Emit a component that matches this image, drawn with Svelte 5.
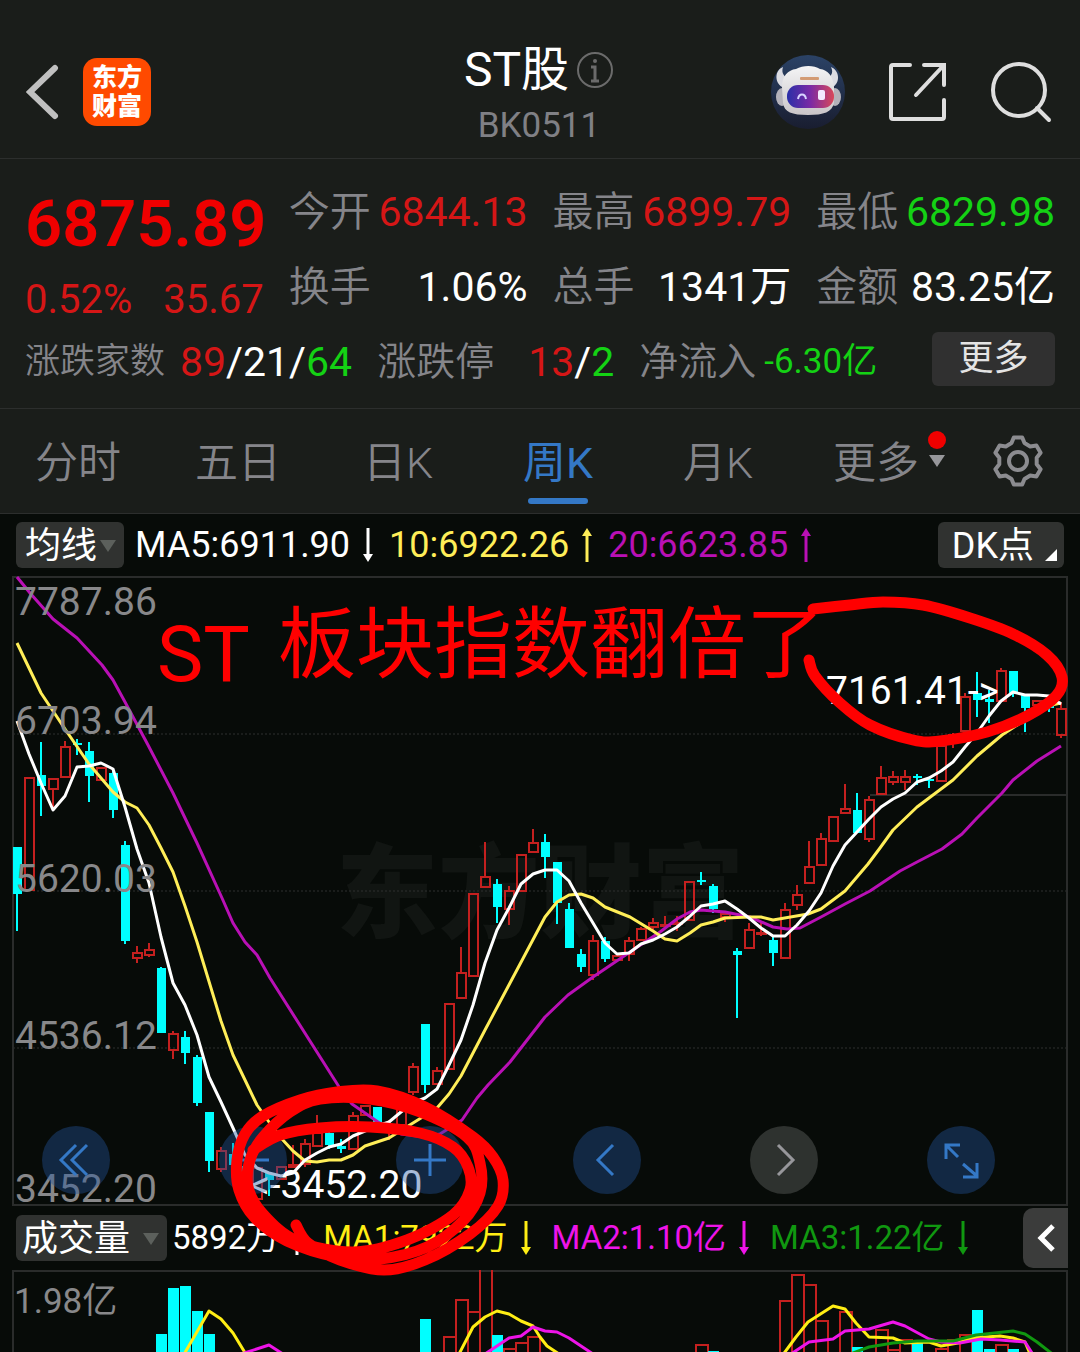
<script lang="ts">
	type Point = [number, number];
	// high, body top, body bottom, low, 1 = rising
	type Candle = [number, number, number, number, 0 | 1];

	const STEP = 12;
	const FIRST_X = 17;

	const quotes = [
		{ label: "今开", value: "6844.13", tone: "up" },
		{ label: "最高", value: "6899.79", tone: "up" },
		{ label: "最低", value: "6829.98", tone: "down" },
		{ label: "换手", value: "1.06%", tone: "flat" },
		{ label: "总手", value: "1341万", tone: "flat" },
		{ label: "金额", value: "83.25亿", tone: "flat" },
	];

	const tabs = ["分时", "五日", "日K", "周K", "月K"];
	let active = $state("周K");

	const averages = [
		{ text: "MA5:6911.90", tone: "white", down: true },
		{ text: "10:6922.26", tone: "yellow", down: false },
		{ text: "20:6623.85", tone: "purple", down: false },
	];

	const volumes = [
		{ text: "5892万", tone: "white", down: false },
		{ text: "MA1:7922万", tone: "bright-yellow", down: true },
		{ text: "MA2:1.10亿", tone: "magenta", down: true },
		{ text: "MA3:1.22亿", tone: "green", down: true },
	];

	const tools = [
		{ name: "最早", icon: "M34 19 L19 34 L34 49 M45 19 L30 34 L45 49" },
		{ name: "缩小", icon: "M18 34 H50" },
		{ name: "放大", icon: "M18 34 H50 M34 18 V50" },
		{ name: "向左", icon: "M40 19 L25 34 L40 49" },
		{ name: "向右", icon: "M28 19 L43 34 L28 49", muted: true },
		{ name: "全屏", icon: "M33 19 H19 V33 M19 19 L31 31 M36 38 L50 50 M36 51 H50 V37" },
	];

	const priceLabels = [
		{ text: "7787.86", y: 615 },
		{ text: "6703.94", y: 734 },
		{ text: "5620.03", y: 892 },
		{ text: "4536.12", y: 1049 },
		{ text: "3452.20", y: 1202 },
	];

	const candles: Candle[] = [
		[847, 847, 894, 931, 0], [777, 777, 891, 891, 1], [742, 775, 786, 816, 0], [778, 778, 790, 807, 1],
		[741, 746, 778, 778, 1], [739, 743, 745, 755, 0], [742, 751, 776, 802, 0], [767, 767, 781, 781, 1],
		[770, 773, 810, 818, 0], [841, 845, 941, 944, 0], [946, 952, 959, 963, 1], [943, 949, 956, 957, 1],
		[967, 968, 1033, 1033, 0], [1031, 1033, 1051, 1059, 1], [1031, 1037, 1053, 1064, 0], [1055, 1057, 1103, 1106, 0],
		[1112, 1112, 1161, 1172, 0], [1147, 1150, 1170, 1172, 1], [1143, 1154, 1165, 1166, 0], [1160, 1166, 1188, 1198, 0],
		[1167, 1167, 1200, 1201, 1], [1172, 1173, 1180, 1196, 0], [1166, 1166, 1180, 1180, 1], [1145, 1164, 1168, 1168, 1],
		[1139, 1143, 1165, 1167, 1], [1115, 1132, 1147, 1147, 1], [1132, 1133, 1145, 1149, 0], [1139, 1146, 1149, 1153, 0],
		[1112, 1115, 1150, 1150, 1], [1105, 1105, 1116, 1116, 1], [1107, 1107, 1123, 1124, 0], [1120, 1125, 1133, 1140, 1],
		[1106, 1106, 1126, 1126, 1], [1063, 1066, 1093, 1095, 1], [1024, 1024, 1085, 1093, 0], [1067, 1070, 1085, 1085, 1],
		[1003, 1003, 1070, 1070, 1], [947, 972, 999, 999, 1], [893, 893, 977, 977, 1], [842, 876, 888, 888, 1],
		[879, 884, 907, 923, 0], [886, 890, 910, 925, 1], [854, 854, 892, 892, 1], [829, 842, 853, 853, 1],
		[834, 842, 857, 878, 0], [862, 862, 903, 924, 0], [903, 909, 948, 948, 0], [949, 954, 967, 972, 0],
		[935, 940, 976, 980, 1], [937, 941, 959, 962, 0], [955, 955, 961, 961, 1], [937, 940, 955, 961, 1],
		[927, 928, 941, 941, 1], [918, 922, 928, 930, 1], [916, 924, 926, 928, 1], [916, 922, 925, 931, 1],
		[881, 881, 921, 921, 1], [872, 880, 882, 885, 0], [884, 886, 909, 913, 0], [913, 913, 918, 922, 1],
		[948, 951, 955, 1018, 0], [923, 929, 949, 949, 1], [922, 932, 934, 936, 1], [937, 940, 953, 966, 0],
		[903, 909, 959, 959, 1], [885, 894, 906, 910, 1], [841, 866, 884, 884, 1], [833, 838, 866, 866, 1],
		[816, 816, 842, 842, 1], [784, 808, 814, 814, 1], [793, 810, 833, 833, 0], [796, 799, 840, 842, 1],
		[766, 777, 795, 795, 1], [771, 776, 783, 785, 1], [770, 776, 783, 790, 1], [774, 776, 778, 785, 0],
		[777, 779, 781, 788, 0], [745, 745, 782, 782, 1], [733, 734, 737, 748, 1], [693, 696, 732, 732, 1],
		[672, 693, 700, 717, 0], [690, 699, 702, 723, 0], [668, 670, 702, 702, 1], [671, 671, 694, 697, 0],
		[695, 695, 708, 732, 0], [700, 700, 706, 706, 1], [703, 704, 708, 712, 0], [702, 708, 736, 738, 1],
	];

	const ma5 = [
		721, 754, 783, 810, 796, 767, 766, 763, 769, 807, 849, 883, 937, 983, 1005, 1035, 1077, 1102, 1128, 1155,
		1168, 1173, 1176, 1173, 1160, 1153, 1147, 1144, 1136, 1131, 1126, 1122, 1112, 1103, 1098, 1089, 1065, 1040,
		1005, 963, 930, 908, 884, 874, 870, 870, 881, 903, 923, 943, 954, 953, 944, 940, 934, 927, 917, 906, 904,
		901, 909, 918, 928, 936, 936, 925, 911, 893, 866, 845, 832, 819, 807, 799, 793, 782, 778, 771, 762, 747,
		733, 716, 701, 692, 695, 695, 696, 704,
	].map((y, i): Point => [FIRST_X + i * STEP, y]);

	const ma10: Point[] = [
		[17, 643], [41, 693], [65, 729], [89, 764], [101, 778], [113, 792], [125, 802], [137, 808], [149, 825],
		[161, 848], [173, 872], [185, 906], [197, 942], [221, 1021], [233, 1055], [245, 1080], [257, 1105],
		[269, 1122], [281, 1138], [293, 1151], [305, 1161], [317, 1162], [329, 1160], [341, 1160], [353, 1155],
		[365, 1146], [389, 1138], [413, 1123], [437, 1108], [449, 1094], [461, 1076], [485, 1030], [510, 983],
		[545, 917], [557, 902], [569, 895], [581, 894], [593, 898], [605, 907], [630, 917], [653, 931], [665, 939],
		[677, 941], [690, 933], [701, 925], [713, 922], [725, 918], [750, 917], [761, 917], [773, 920], [808, 914],
		[821, 909], [845, 891], [868, 864], [880, 848], [893, 830], [917, 807], [953, 780], [977, 756],
		[1002, 735], [1025, 720], [1047, 706], [1061, 703],
	];

	const ma20: Point[] = [
		[17, 577], [30, 593], [53, 619], [77, 638], [102, 665], [113, 680], [125, 702], [148, 745], [173, 793],
		[197, 843], [222, 898], [233, 923], [245, 942], [257, 955], [270, 978], [322, 1060], [341, 1090],
		[352, 1104], [378, 1122], [401, 1134], [425, 1137], [440, 1134], [462, 1120], [477, 1098], [488, 1085],
		[510, 1062], [545, 1017], [568, 995], [593, 977], [630, 952], [660, 932], [677, 919], [690, 912],
		[701, 910], [725, 912], [750, 917], [773, 927], [787, 929], [800, 928], [821, 917], [845, 904], [870, 891],
		[900, 871], [917, 862], [942, 849], [962, 834], [977, 818], [1002, 793], [1013, 780], [1037, 761],
		[1061, 746],
	];

	// candle index, top, 1 = rising
	const bars: [number, number, 0 | 1][] = [
		[12, 1334, 0], [13, 1288, 0], [14, 1286, 0], [15, 1311, 0], [16, 1334, 0], [34, 1319, 0], [36, 1337, 1],
		[37, 1300, 1], [38, 1312, 1], [39, 1266, 1], [40, 1335, 0], [41, 1349, 1], [42, 1343, 1], [43, 1337, 1],
		[57, 1345, 1], [58, 1351, 0], [64, 1301, 1], [65, 1275, 1], [66, 1285, 1], [67, 1321, 1], [69, 1312, 1],
		[70, 1347, 0], [72, 1330, 1], [73, 1350, 1], [74, 1340, 1], [75, 1343, 0], [77, 1349, 1], [78, 1340, 1],
		[79, 1335, 1], [80, 1310, 0], [81, 1349, 0], [82, 1345, 1], [83, 1349, 0],
	];

	const volumeLines: { tone: string; points: Point[] }[] = [
		{ tone: "bright-yellow", points: [[183, 1356], [209, 1311], [221, 1319], [233, 1333], [247, 1356]] },
		{
			tone: "bright-yellow",
			points: [[458, 1356], [473, 1327], [485, 1317], [497, 1311], [509, 1314], [521, 1321], [533, 1326], [540, 1337], [547, 1346], [562, 1356]],
		},
		{
			tone: "bright-yellow",
			points: [[782, 1356], [796, 1337], [808, 1322], [833, 1306], [845, 1309], [856, 1323], [869, 1337], [893, 1338], [905, 1343], [929, 1342], [941, 1346], [958, 1343], [972, 1338], [1000, 1336], [1013, 1338], [1025, 1342], [1031, 1356]],
		},
		{ tone: "magenta", points: [[235, 1356], [269, 1345], [286, 1356]] },
		{
			tone: "magenta",
			points: [[482, 1356], [509, 1338], [521, 1336], [533, 1327], [545, 1331], [557, 1332], [569, 1338], [596, 1356]],
		},
		{
			tone: "magenta",
			points: [[788, 1356], [809, 1342], [833, 1339], [845, 1331], [869, 1329], [893, 1322], [905, 1326], [929, 1339], [941, 1342], [960, 1343], [981, 1339], [1000, 1340], [1025, 1342], [1034, 1356]],
		},
		{
			tone: "green",
			points: [[845, 1356], [869, 1347], [893, 1343], [917, 1341], [953, 1341], [976, 1335], [1013, 1331], [1025, 1334], [1037, 1342], [1055, 1356]],
		},
	];

	const peakStroke: Point[] = [
		[813, 609], [850, 605], [883, 602], [923, 605], [970, 618], [1013, 634], [1047, 655], [1062, 677], [1056, 696],
		[1027, 716], [987, 732], [940, 741], [913, 740], [870, 725], [840, 703], [815, 676], [809, 660],
	];

	const bottomStroke: Point[] = [
		[296, 1225], [308, 1243], [340, 1260], [384, 1270], [425, 1260], [470, 1234], [498, 1206], [503, 1180],
		[493, 1157], [473, 1137], [425, 1107], [377, 1091], [337, 1092], [300, 1100], [263, 1116], [245, 1134],
		[237, 1160], [239, 1190], [255, 1218], [287, 1241], [337, 1257], [380, 1259], [427, 1247], [463, 1221],
		[480, 1193], [480, 1163], [467, 1137], [420, 1112], [370, 1099], [320, 1099], [290, 1112], [263, 1137],
		[250, 1160], [248, 1187], [263, 1214], [297, 1241], [353, 1252], [407, 1240], [453, 1215], [470, 1190],
		[468, 1167], [453, 1147], [420, 1133], [370, 1127], [320, 1128], [280, 1135], [253, 1150],
	];

	function polyline(points: Point[]) {
		return points.map((p) => p.join(",")).join(" ");
	}

	// Catmull-Rom through every point
	function smooth(points: Point[]) {
		let d = `M${points[0]}`;
		for (let i = 0; i < points.length - 1; i++) {
			const a = points[i - 1] ?? points[i];
			const b = points[i];
			const c = points[i + 1];
			const e = points[i + 2] ?? c;
			d += ` C${b[0] + (c[0] - a[0]) / 6},${b[1] + (c[1] - a[1]) / 6}`;
			d += ` ${c[0] - (e[0] - b[0]) / 6},${c[1] - (e[1] - b[1]) / 6} ${c}`;
		}
		return d;
	}

	function gear() {
		const points: string[] = [];
		for (let k = 0; k < 6; k++) {
			for (const [offset, r] of [[-20, 19], [-10, 24], [10, 24], [20, 19]]) {
				const angle = ((k * 60 - 90 + offset) * Math.PI) / 180;
				points.push(`${(26 + r * Math.cos(angle)).toFixed(1)},${(26 + r * Math.sin(angle)).toFixed(1)}`);
			}
		}
		return points.join(" ");
	}
</script>

{#snippet arrow(down: boolean)}
	<svg class="arrow" viewBox="0 0 12 34" aria-hidden="true">
		{#if down}
			<path d="M6 0 V30" fill="none" stroke="currentColor" stroke-width="3" />
			<path d="M1 26 H11 L6 34 Z" fill="currentColor" />
		{:else}
			<path d="M6 4 V34" fill="none" stroke="currentColor" stroke-width="3" />
			<path d="M1 8 H11 L6 0 Z" fill="currentColor" />
		{/if}
	</svg>
{/snippet}

<main class="app">
	<header class="topbar">
		<div class="side">
			<button class="icon" aria-label="返回">
				<svg width="34" height="60" viewBox="0 0 34 60">
					<path d="M29 6 L4 30 L29 54" fill="none" stroke="#c0c0c0" stroke-width="6" stroke-linecap="round" />
				</svg>
			</button>
			<div class="brand"><span>东方</span><span>财富</span></div>
		</div>
		<div class="heading">
			<h1>
				ST股
				<svg width="38" height="38" viewBox="0 0 38 38" aria-hidden="true">
					<circle cx="19" cy="19" r="17" fill="none" stroke="#6b6b6b" stroke-width="2" />
					<circle cx="19" cy="10" r="2" fill="#6b6b6b" />
					<path d="M15 16 H19 V29 M15 30 H23" fill="none" stroke="#6b6b6b" stroke-width="3" />
				</svg>
			</h1>
			<p>BK0511</p>
		</div>
		<div class="side end">
			<button class="icon" aria-label="智能助手">
				<svg width="76" height="76" viewBox="0 0 76 76">
					<defs>
						<linearGradient id="sky" x2="0" y2="1">
							<stop offset="0" stop-color="#2b4266" />
							<stop offset="1" stop-color="#191d30" />
						</linearGradient>
						<linearGradient id="fur" x2="0" y2="1">
							<stop offset="0" stop-color="#f4f4f5" />
							<stop offset="1" stop-color="#c9c5c8" />
						</linearGradient>
						<linearGradient id="visor">
							<stop offset="0" stop-color="#2a2fa8" />
							<stop offset=".5" stop-color="#7b2aa5" />
							<stop offset="1" stop-color="#d8485a" />
						</linearGradient>
					</defs>
					<circle cx="38" cy="38" r="37" fill="url(#sky)" />
					<path d="M13 13 C5 16 4 28 12 33 L20 25 C14 23 11 19 13 13 Z M61 13 C69 16 71 28 63 33 L55 25 C61 23 64 19 61 13 Z" fill="#dcdce2" />
					<ellipse cx="12" cy="43" rx="6" ry="9" fill="#b4b2ba" />
					<ellipse cx="65" cy="43" rx="6" ry="9" fill="#b4b2ba" />
					<path d="M12 33 C12 22 18 16 26 15 C33 11 44 11 50 15 C58 16 63 22 64 33 L64 49 C62 58 54 61 38 61 C22 61 14 58 13 49 Z" fill="url(#fur)" />
					<rect x="17" y="31" width="47" height="23" rx="11" fill="url(#visor)" />
					<rect x="30" y="23" width="19" height="3" rx="1" fill="#d39b74" />
					<path d="M28 45 C29 39 35 39 36 45" fill="none" stroke="#d8d4ff" stroke-width="2" />
					<rect x="48" y="36" width="7" height="10" rx="2" fill="#f3e9ff" />
				</svg>
			</button>
			<button class="icon" aria-label="分享">
				<svg width="60" height="60" viewBox="0 0 60 60">
					<path d="M22 3 H5 Q3 3 3 5 V55 Q3 57 5 57 H54 Q56 57 56 55 V38 M36 3 H56 V23 M56 3 L28 33" fill="none" stroke="#dedede" stroke-width="4" stroke-linecap="round" />
				</svg>
			</button>
			<button class="icon" aria-label="搜索">
				<svg width="62" height="62" viewBox="0 0 62 62">
					<circle cx="29" cy="29" r="26" fill="none" stroke="#dedede" stroke-width="4" />
					<path d="M47 47 L59 59" stroke="#dedede" stroke-width="4" stroke-linecap="round" />
				</svg>
			</button>
		</div>
	</header>

	<section class="quote">
		<div class="grid">
			<div class="price up">
				<strong>6875.89</strong>
				<div class="change"><span>0.52%</span><span>35.67</span></div>
			</div>
			{#each quotes as { label, value, tone }}
				<div class="cell"><span class="label">{label}</span><span class={tone}>{value}</span></div>
			{/each}
		</div>
		<div class="breadth">
			<div class="group">
				<span class="label small">涨跌家数</span>
				<span><i class="up">89</i>/21/<i class="down">64</i></span>
			</div>
			<div class="group wide">
				<span class="label">涨跌停</span>
				<span><i class="up">13</i>/<i class="down">2</i></span>
			</div>
			<div class="group flow">
				<span class="label">净流入</span>
				<span class="down small">-6.30亿</span>
			</div>
			<button class="more">更多</button>
		</div>
	</section>

	<nav class="tabs">
		{#each tabs as tab}
			<button class="tab" class:active={tab === active} onclick={() => (active = tab)}>{tab}</button>
		{/each}
		<button class="tab menu">
			更多
			<span class="dot"></span>
			<span class="caret"></span>
		</button>
		<button class="tab settings" aria-label="设置">
			<svg width="52" height="52" viewBox="0 0 52 52">
				<polygon points={gear()} fill="none" stroke="#8c8c90" stroke-width="4" stroke-linejoin="round" />
				<circle cx="26" cy="26" r="9" fill="none" stroke="#8c8c90" stroke-width="4" />
			</svg>
		</button>
	</nav>

	<div class="indicator">
		<button class="chip">均线<span class="caret"></span></button>
		{#each averages as { text, tone, down }}
			<span class="reading {tone}">{text}{@render arrow(down)}</span>
		{/each}
		<button class="chip dk">DK点<span class="corner"></span></button>
	</div>

	<section class="chart">
		<svg class="plot" viewBox="12 576 1056 630" role="img" aria-label="周K线">
			<text class="watermark" x="336" y="930">东方财富</text>
			<path class="grid-line" d="M13 734 H1067 M13 891 H1067 M13 1048 H1067" />
			<path class="frame" d="M870 795 H1067" />
			<rect class="frame" x="13" y="577" width="1054" height="628" />
			{#each candles as [high, top, bottom, low, rising], i}
				{@const x = FIRST_X + i * STEP}
				{#if rising}
					<path class="rising" d="M{x} {high} V{top} M{x} {bottom} V{low}" />
					<rect class="rising" x={x - 4} y={top + 1} width="9" height={Math.max(bottom - top - 2, 1)} />
				{:else}
					<path class="falling" d="M{x} {high} V{low}" />
					<rect class="falling-body" x={x - 4} y={top} width="9" height={bottom - top} />
				{/if}
			{/each}
			<polyline class="line purple" points={polyline(ma20)} />
			<polyline class="line yellow" points={polyline(ma10)} />
			<polyline class="line white" points={polyline(ma5)} />
			{#each priceLabels as { text, y }}
				<text class="axis" x="15" {y}>{text}</text>
			{/each}
			<text class="extreme" x="826" y="704">7161.41-&gt;</text>
			<text class="extreme" x="250" y="1198">&lt;-3452.20</text>
		</svg>
		<div class="tools">
			{#each tools as { name, icon, muted }}
				<button class="tool" class:muted aria-label={name}>
					<svg viewBox="0 0 68 68"><path d={icon} fill="none" stroke="currentColor" stroke-width="3" /></svg>
				</button>
			{/each}
		</div>
		<svg class="scribble" viewBox="12 576 1056 630" aria-hidden="true">
			<text x="157" y="681">ST</text>
			<text x="278" y="672">板块指数翻倍了</text>
			<path d={smooth(peakStroke)} />
			<path d={smooth(bottomStroke)} />
		</svg>
	</section>

	<div class="indicator volume">
		<button class="chip">成交量<span class="caret"></span></button>
		{#each volumes as { text, tone, down }}
			<span class="reading {tone}">{text}{@render arrow(down)}</span>
		{/each}
		<button class="drawer" aria-label="展开">
			<svg width="20" height="32" viewBox="0 0 20 32">
				<path d="M17 4 L5 16 L17 28" fill="none" stroke="#fff" stroke-width="5" />
			</svg>
		</button>
	</div>

	<section class="chart bottom">
		<svg class="plot" viewBox="12 1270 1056 82" role="img" aria-label="成交量">
			<path class="frame" d="M13 1360 V1271 H1067 V1360" />
			{#each bars as [i, top, rising]}
				{@const x = FIRST_X + i * STEP}
				<rect class={rising ? "rising" : "falling-body"} x={x - 5} y={top} width={rising ? 12 : 11} height={1360 - top} />
			{/each}
			{#each volumeLines as { tone, points }}
				<polyline class="line {tone}" points={polyline(points)} />
			{/each}
			<text class="axis" x="14" y="1313">1.98亿</text>
		</svg>
	</section>
</main>

<style>
	:global(body) {
		margin: 0;
		background: #070b08;
	}

	.app {
		overflow: hidden;
		background: #070b08;
		color: #fff;
		font-family: Roboto, "Noto Sans CJK SC", sans-serif;
		font-size: 41px;
		line-height: 48px;
		white-space: nowrap;
	}

	button {
		margin: 0;
		padding: 0;
		border: 0;
		background: none;
		color: inherit;
		font: inherit;
		cursor: pointer;
	}

	svg {
		display: block;
	}

	.topbar {
		display: grid;
		grid-template-columns: 1fr auto 1fr;
		align-items: center;
		height: 132px;
		padding: 26px 28px 0 26px;
		border-bottom: 1px solid #2c2e2d;
		background: #1a1d1a;
	}

	.side {
		display: flex;
		align-items: center;
		gap: 23px;
	}

	.side.end {
		justify-content: flex-end;
		gap: 42px;
	}

	.brand {
		display: flex;
		flex-direction: column;
		justify-content: center;
		width: 68px;
		height: 68px;
		border-radius: 14px;
		background: #ff4a00;
		font-size: 25px;
		font-weight: 900;
		line-height: 29px;
		text-align: center;
	}

	.heading {
		padding-top: 8px;
		text-align: center;
	}

	h1 {
		display: flex;
		align-items: center;
		gap: 7px;
		margin: 0;
		font-size: 48px;
		font-weight: 400;
		line-height: 56px;
	}

	.heading p {
		margin: 4px 0 0;
		color: #808085;
		font-size: 35px;
		line-height: 48px;
	}

	.quote {
		padding: 15px 25px 9px;
		border-bottom: 1px solid #2c2e2d;
		background: #1a1d1a;
	}

	.grid {
		display: grid;
		grid-template-columns: repeat(4, minmax(0, 1fr));
		grid-auto-rows: 75px;
		column-gap: 25px;
	}

	.price {
		grid-row: span 2;
		display: flex;
		flex-direction: column;
		gap: 17px;
		padding-top: 15px;
	}

	.price strong {
		color: #f00000;
		font-size: 65px;
		font-weight: 600;
		line-height: 70px;
	}

	.change,
	.cell {
		display: flex;
		justify-content: space-between;
	}

	.change {
		font-size: 40px;
	}

	.cell {
		align-items: center;
	}

	.label {
		color: #85858a;
		font-size: 41px;
		font-weight: 350;
	}

	.breadth .label {
		font-size: 39px;
	}

	.breadth .small {
		font-size: 35px;
	}

	i {
		font-style: normal;
	}

	.up {
		color: #d51616;
	}

	.down {
		color: #14d214;
	}

	.breadth {
		display: flex;
		align-items: center;
		gap: 25px;
		height: 75px;
	}

	.group {
		display: flex;
		align-items: center;
		gap: 15px;
	}

	.group.wide {
		gap: 34px;
	}

	.group.flow {
		gap: 8px;
	}

	.more {
		width: 123px;
		height: 54px;
		margin: 0 0 6px auto;
		border-radius: 6px;
		background: #303030;
		color: #e4e4e4;
		font-size: 35px;
	}

	.tabs {
		display: grid;
		grid-template-columns: repeat(6, 4fr) 3fr;
		height: 104px;
		border-bottom: 1px solid #2c2e2d;
		background: #1a1d1a;
	}

	.tab {
		position: relative;
		display: flex;
		align-items: center;
		justify-content: center;
		padding: 4px 4px 0 0;
		color: #85858a;
		font-size: 43px;
		font-weight: 350;
	}

	.tab.active {
		color: #3478c6;
		font-weight: 400;
	}

	.tab.active::after {
		content: "";
		position: absolute;
		bottom: 9px;
		width: 60px;
		height: 6px;
		border-radius: 3px;
		background: #3478c6;
	}

	.tab.menu {
		padding-right: 8px;
	}

	.tab.settings {
		padding-top: 0;
	}

	.dot {
		position: absolute;
		top: 22px;
		right: 14px;
		width: 18px;
		height: 18px;
		border-radius: 50%;
		background: #f00000;
	}

	.caret {
		border: 8px solid transparent;
		border-top: 12px solid #5c605c;
		border-bottom: 0;
	}

	.tab .caret {
		position: absolute;
		top: 46px;
		right: 15px;
		border-top-color: #97979b;
	}

	.indicator {
		display: flex;
		align-items: center;
		gap: 15px;
		height: 62px;
		padding: 0 16px;
		font-size: 36px;
	}

	.chip {
		position: relative;
		display: flex;
		align-items: center;
		gap: 3px;
		height: 46px;
		margin-right: -4px;
		padding: 2px 8px 0 9px;
		box-sizing: border-box;
		border-radius: 6px;
		background: #303230;
		font-size: 36px;
	}

	.chip.dk {
		margin: 0 0 0 auto;
		padding: 2px 30px 0 14px;
	}

	.corner {
		position: absolute;
		right: 7px;
		bottom: 7px;
		border: 6px solid #fff;
		border-top-color: transparent;
		border-left-color: transparent;
	}

	.reading {
		display: flex;
		align-items: center;
		gap: 12px;
	}

	.arrow {
		width: 12px;
		height: 34px;
	}

	.volume {
		gap: 20px;
		height: 64px;
		padding-right: 12px;
		font-size: 33px;
	}

	.volume .chip {
		gap: 13px;
		margin-right: -15px;
		padding: 2px 8px 0 6px;
	}

	.drawer {
		display: flex;
		align-items: center;
		justify-content: center;
		width: 45px;
		height: 60px;
		margin-left: auto;
		border-radius: 10px 0 0 10px;
		background: #3b3c3b;
	}

	.chart {
		position: relative;
		padding: 0 12px;
	}

	.plot {
		width: 100%;
		height: auto;
		overflow: visible;
	}

	.bottom .plot {
		overflow: hidden;
	}

	.frame {
		fill: none;
		stroke: #2a2c2b;
		stroke-width: 2;
	}

	.grid-line {
		fill: none;
		stroke: #2e302e;
		stroke-dasharray: 2 2;
	}

	.watermark {
		fill: #111512;
		font-size: 102px;
		font-weight: 900;
	}

	.rising {
		fill: none;
		stroke: #c4201f;
		stroke-width: 2;
	}

	.falling {
		stroke: #00ffff;
		stroke-width: 2;
	}

	.falling-body {
		fill: #00ffff;
	}

	.line {
		fill: none;
		stroke: currentColor;
		stroke-width: 3;
		stroke-linejoin: round;
	}

	.axis {
		fill: #88888a;
		font-size: 39px;
	}

	.bottom .axis {
		font-size: 35px;
	}

	.extreme {
		fill: #fff;
		font-size: 39px;
	}

	.white {
		color: #fff;
	}

	.yellow {
		color: #ffee58;
	}

	.bright-yellow {
		color: #ffee14;
	}

	.purple {
		color: #b910b5;
	}

	.magenta {
		color: #ee14e8;
	}

	.green {
		color: #109810;
	}

	.tools {
		position: absolute;
		right: 85px;
		bottom: 12px;
		left: 42px;
		display: flex;
		justify-content: space-between;
	}

	.tool {
		width: 68px;
		height: 68px;
		border-radius: 50%;
		background: rgb(34 86 158 / 40%);
		color: #3478c6;
	}

	.tool.muted {
		background: rgb(255 255 255 / 16%);
		color: #97979b;
	}

	.scribble {
		position: absolute;
		z-index: 1;
		top: 0;
		left: 12px;
		width: calc(100% - 24px);
		overflow: visible;
		pointer-events: none;
	}

	.scribble path {
		fill: none;
		stroke: #ff0000;
		stroke-width: 11;
		stroke-linecap: round;
		stroke-linejoin: round;
	}

	.scribble text {
		fill: #ff0000;
		font-size: 78px;
	}
</style>
